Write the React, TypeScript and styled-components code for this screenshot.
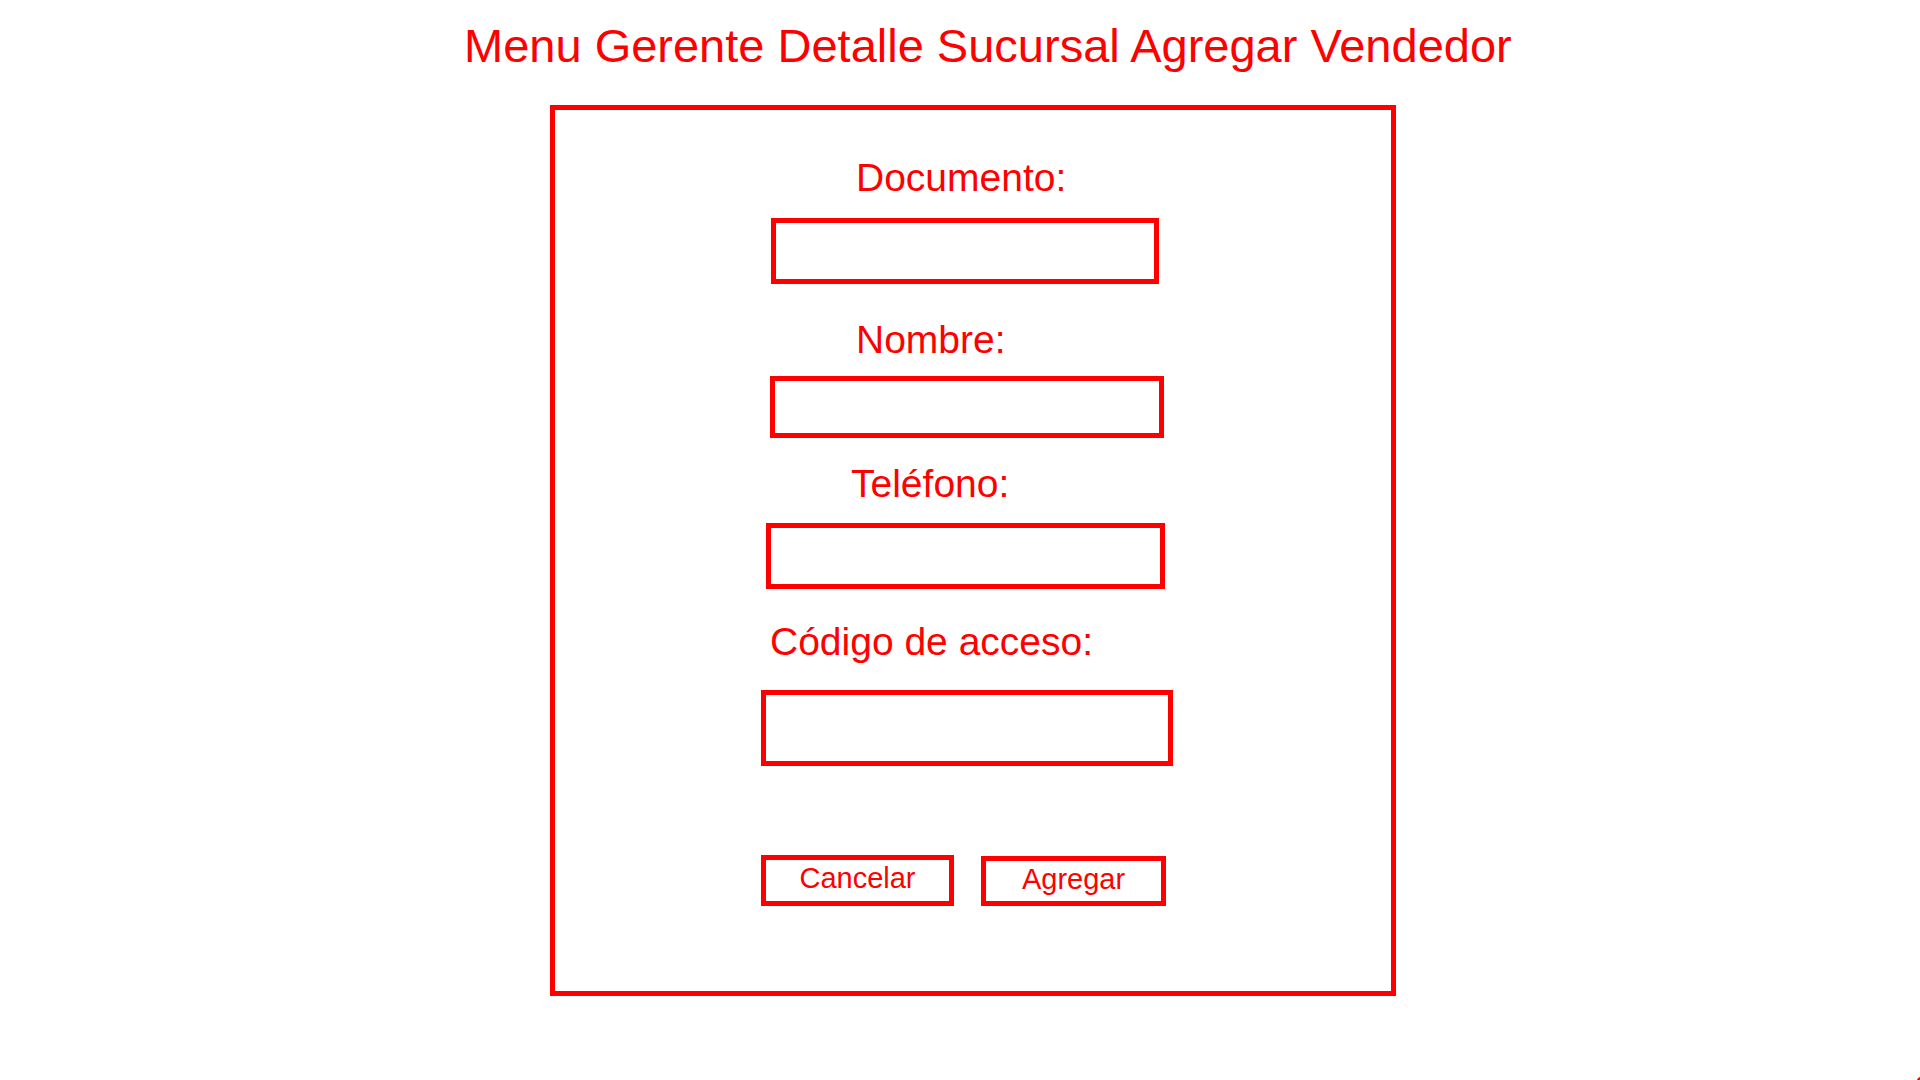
import styled, { createGlobalStyle } from 'styled-components';

const RED = '#ff0000';

const GlobalStyle = createGlobalStyle`
  html, body {
    margin: 0;
    padding: 0;
    background: #ffffff;
  }

  body {
    font-family: "Liberation Sans", Arial, sans-serif;
    color: ${RED};
  }
`;

const Page = styled.main`
  width: 1920px;
  height: 1080px;
  display: flex;
  flex-direction: column;
  align-items: flex-start;
`;

const Title = styled.h1`
  margin: 19px 0 0 464px;
  font-size: 47px;
  font-weight: 400;
  line-height: 54px;
  white-space: nowrap;
  color: ${RED};
`;

const Panel = styled.form`
  box-sizing: border-box;
  width: 846px;
  height: 891px;
  margin: 32px 0 0 550px;
  padding-top: 45px;
  border: 5px solid ${RED};
  display: flex;
  flex-direction: column;
  align-items: flex-start;
`;

const Label = styled.label<{ $indent: number; $gap: number }>`
  margin: ${({ $gap }) => $gap}px 0 0 ${({ $indent }) => $indent}px;
  font-size: 39px;
  line-height: 45px;
  white-space: nowrap;
`;

const TextBox = styled.input<{ $indent: number; $gap: number; $w: number; $h: number }>`
  box-sizing: border-box;
  width: ${({ $w }) => $w}px;
  height: ${({ $h }) => $h}px;
  margin: ${({ $gap }) => $gap}px 0 0 ${({ $indent }) => $indent}px;
  padding: 0 10px;
  border: 5px solid ${RED};
  border-radius: 0;
  background: #ffffff;
  font: 24px "Liberation Sans", Arial, sans-serif;
  color: ${RED};
  outline: none;
`;

const ButtonRow = styled.div`
  margin: 89px 0 0 206px;
  display: flex;
  align-items: flex-start;
  gap: 27px;
`;

const Button = styled.button<{ $w: number; $h: number; $nudge?: number }>`
  box-sizing: border-box;
  width: ${({ $w }) => $w}px;
  height: ${({ $h }) => $h}px;
  margin-top: ${({ $nudge = 0 }) => $nudge}px;
  padding: 0 0 5px;
  border: 5px solid ${RED};
  border-radius: 0;
  background: #ffffff;
  font-family: "Liberation Sans", Arial, sans-serif;
  font-size: 29px;
  line-height: 32px;
  text-align: center;
  color: ${RED};
  cursor: pointer;
`;

const CornerMark = styled.svg`
  position: fixed;
  right: 0;
  bottom: 0;
  width: 3px;
  height: 3px;
`;

const fields = [
  { id: 'documento', label: 'Documento:', labelIndent: 301, labelGap: 0, boxIndent: 216, boxGap: 18, w: 388, h: 66 },
  { id: 'nombre', label: 'Nombre:', labelIndent: 301, labelGap: 33, boxIndent: 215, boxGap: 14, w: 394, h: 62 },
  { id: 'telefono', label: 'Teléfono:', labelIndent: 296, labelGap: 23, boxIndent: 211, boxGap: 17, w: 399, h: 66 },
  { id: 'codigo', label: 'Código de acceso:', labelIndent: 215, labelGap: 30, boxIndent: 206, boxGap: 26, w: 412, h: 76 },
];

export default function App() {
  return (
    <>
      <GlobalStyle />
      <Page>
        <Title>Menu Gerente Detalle Sucursal Agregar Vendedor</Title>

        <Panel onSubmit={(e) => e.preventDefault()}>
          {fields.map((f) => [
            <Label key={f.id + '-label'} htmlFor={f.id} $indent={f.labelIndent} $gap={f.labelGap}>
              {f.label}
            </Label>,
            <TextBox
              key={f.id}
              id={f.id}
              type="text"
              $indent={f.boxIndent}
              $gap={f.boxGap}
              $w={f.w}
              $h={f.h}
            />,
          ])}

          <ButtonRow>
            <Button type="button" $w={193} $h={51}>
              Cancelar
            </Button>
            <Button type="submit" $w={185} $h={50} $nudge={1}>
              Agregar
            </Button>
          </ButtonRow>
        </Panel>
      </Page>
      <CornerMark viewBox="0 0 3 3">
        <polygon points="3,0 3,3 0,3 1,1" fill={RED} />
      </CornerMark>
    </>
  );
}
